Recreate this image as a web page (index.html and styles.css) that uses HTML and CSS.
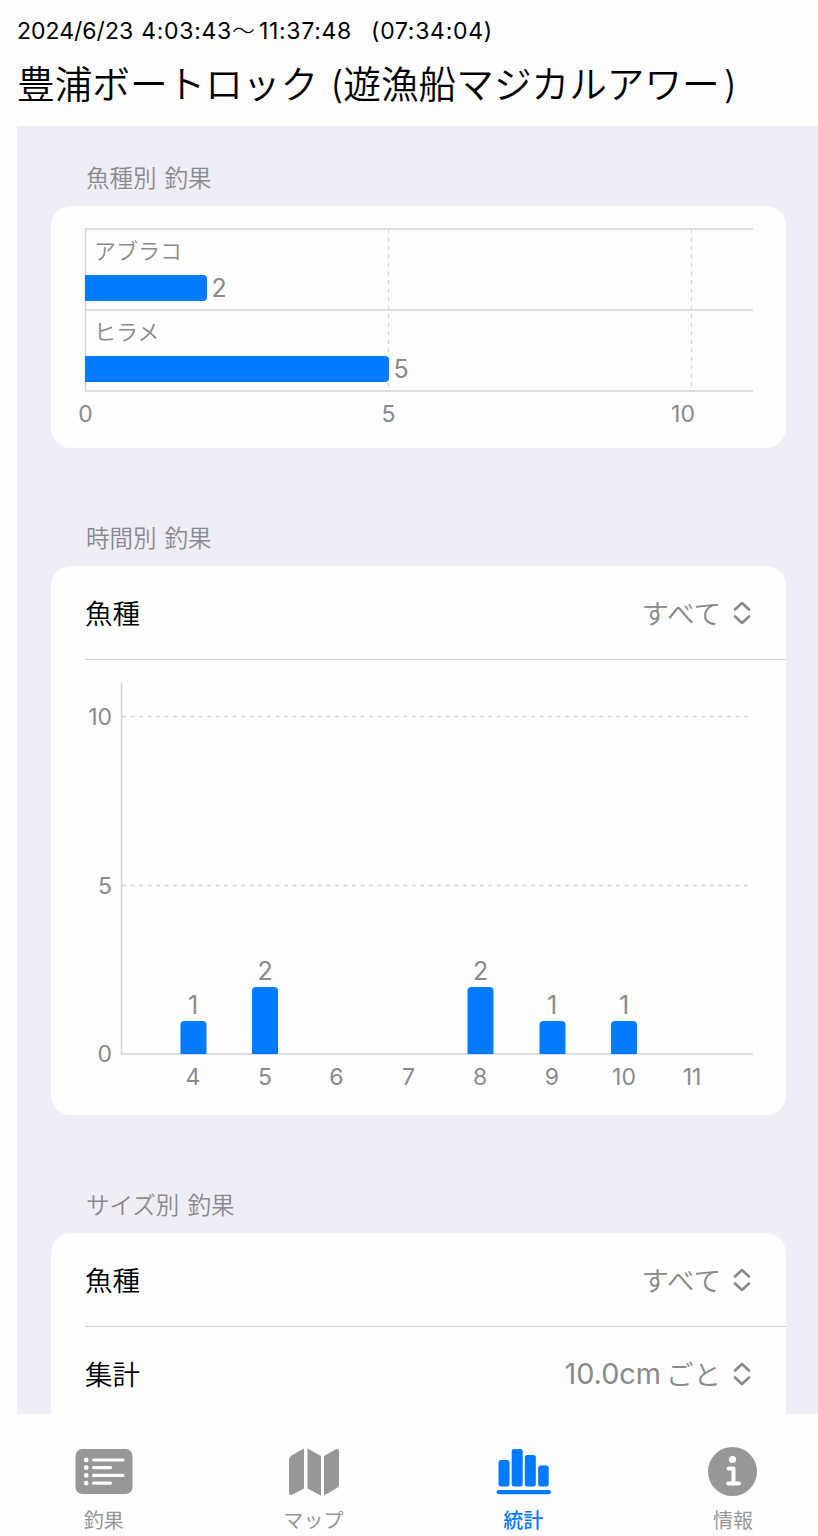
FILE: index.html
```html
<!DOCTYPE html>
<html lang="ja">
<head>
  <meta charset="UTF-8"/>
  <title>統計 - 豊浦ボートロック</title>
  <meta name="viewport" content="width=device-width, initial-scale=1.0"/>
  <link rel="stylesheet" href="styles.css">
</head>
<body>

<header class="header">
  <div class="trip-time"><span class="date">2024/6/23</span><span>4:03:43</span><span class="wave">～</span><span>11:37:48</span><span class="duration">(07:34:04)</span></div>
  <h1>豊浦ボートロック (遊漁船マジカルアワー<span class="paren">)</span></h1>
</header>

<main class="content">
  <h2>魚種別 釣果</h2>
  <section class="card">
    <svg class="chart" width="735" height="242" viewBox="0 0 735 242">
      <g class="axis">
        <path d="M34.5 23V185M34 23H702M34 104H702M34 185H702"/>
        <path class="dash" d="M337.5 23V185M640.5 23V185"/>
      </g>
      <g class="bar">
        <path d="M34 69H152q4 0 4 4V91q0 4-4 4H34z"/>
        <path d="M34 150H334q4 0 4 4V172q0 4-4 4H34z"/>
      </g>
      <text class="fish" x="43" y="53">アブラコ</text>
      <text class="fish" x="43" y="134">ヒラメ</text>
      <g class="value">
        <text x="168" y="91">2</text>
        <text x="350" y="172">5</text>
      </g>
      <g class="tick">
        <text x="34.5" y="216">0</text>
        <text x="337.5" y="216">5</text>
        <text x="632" y="216">10</text>
      </g>
    </svg>
  </section>

  <h2>時間別 釣果</h2>
  <section class="card">
    <div class="row">
      <span>魚種</span>
      <span class="select">すべて
        <svg width="18" height="26" viewBox="0 0 18 26"><path d="M2 9.5L9 3L16 9.5M2 16.5L9 23L16 16.5"/></svg>
      </span>
    </div>
    <svg class="chart" width="735" height="455" viewBox="0 0 735 455">
      <g class="axis">
        <path d="M70.5 23V394H702"/>
        <path class="dash" d="M71 56.5H699M71 225.5H699"/>
      </g>
      <g class="bar">
        <path d="M129.5 394V365q0-4 4-4h18q4 0 4 4V394z"/>
        <path d="M201 394V331q0-4 4-4h18q4 0 4 4V394z"/>
        <path d="M416.5 394V331q0-4 4-4h18q4 0 4 4V394z"/>
        <path d="M488.5 394V365q0-4 4-4h18q4 0 4 4V394z"/>
        <path d="M560 394V365q0-4 4-4h18q4 0 4 4V394z"/>
      </g>
      <g class="value">
        <text x="142" y="354">1</text>
        <text x="214" y="320">2</text>
        <text x="429.5" y="320">2</text>
        <text x="501" y="354">1</text>
        <text x="573" y="354">1</text>
      </g>
      <g class="tick side">
        <text x="61" y="65">10</text>
        <text x="61" y="234">5</text>
        <text x="61" y="402">0</text>
      </g>
      <g class="tick">
        <text x="142" y="425">4</text>
        <text x="214" y="425">5</text>
        <text x="285.5" y="425">6</text>
        <text x="357.5" y="425">7</text>
        <text x="429" y="425">8</text>
        <text x="501" y="425">9</text>
        <text x="573" y="425">10</text>
        <text x="641" y="425">11</text>
      </g>
    </svg>
  </section>

  <h2>サイズ別 釣果</h2>
  <section class="card more">
    <div class="row">
      <span>魚種</span>
      <span class="select">すべて
        <svg width="18" height="26" viewBox="0 0 18 26"><path d="M2 9.5L9 3L16 9.5M2 16.5L9 23L16 16.5"/></svg>
      </span>
    </div>
    <div class="row">
      <span>集計</span>
      <span class="select"><span class="num">10.0cm</span>ごと
        <svg width="18" height="26" viewBox="0 0 18 26"><path d="M2 9.5L9 3L16 9.5M2 16.5L9 23L16 16.5"/></svg>
      </span>
    </div>
  </section>
</main>

<nav class="tabs">
  <a class="tab">
    <svg width="60" height="52" viewBox="0 0 60 52">
      <rect x="1.5" y="3" width="57" height="45" rx="7"/>
      <g class="cut">
        <path d="M19.5 14H49M19.5 21.7H36.5M19.5 29.4H49M19.5 37.1H36.5"/>
        <path class="dots" d="M12.2 14h.01M12.2 21.7h.01M12.2 29.4h.01M12.2 37.1h.01"/>
      </g>
    </svg>
    <span>釣果</span>
  </a>
  <a class="tab">
    <svg width="60" height="52" viewBox="0 0 60 52">
      <path d="M20 2.5V42.5L8 48.8Q5 50 5 46.5V13.5Q5 10.8 7.5 9.5z"/>
      <path d="M23.5 2.5L37 10V49.5L23.5 42.5z"/>
      <path d="M40 10L52 3.2Q55 2 55 5.5V38.5Q55 41 52.5 42.3L40 49.5z"/>
    </svg>
    <span>マップ</span>
  </a>
  <a class="tab active">
    <svg width="60" height="52" viewBox="0 0 60 52">
      <rect x="5.5" y="14" width="11" height="26.5" rx="2.5"/>
      <rect x="18.7" y="3" width="11" height="37.5" rx="2.5"/>
      <rect x="31.8" y="9" width="11" height="31.5" rx="2.5"/>
      <rect x="45.2" y="19.5" width="10.5" height="21" rx="2.5"/>
      <rect x="3.5" y="44" width="54.5" height="4.2" rx="2.1"/>
    </svg>
    <span>統計</span>
  </a>
  <a class="tab">
    <svg width="60" height="52" viewBox="0 0 60 52">
      <circle cx="29.5" cy="25.5" r="24.5"/>
      <circle class="hole" cx="29.5" cy="13.5" r="3.6"/>
      <path class="stem" d="M25.5 22.5H30.5V37.5M25 37.5H36"/>
    </svg>
    <span>情報</span>
  </a>
</nav>

</body>
</html>
```
FILE: styles.css
```css
:root {
  --azul: #007aff;
  --fondo: #efeef6;
  --blanco: #fdfdfd;
  --gris: #8a8a8a;
  --linea: #d4d4d6;
}
* {
  margin: 0; padding: 0; box-sizing: border-box;
}
body {
  width: 818px;
  height: 1536px;
  overflow: hidden;
  background: var(--blanco);
  color: #000;
  font-family: Inter, "Noto Sans CJK JP", sans-serif;
  font-weight: 350;
}
.header {
  height: 126px;
  padding: 15px 0 0 17px;
}
.trip-time {
  display: flex;
  height: 32px;
  line-height: 32px;
  font-size: 23px;
  font-weight: 400;
  letter-spacing: 0.7px;
}
.date {
  margin-right: 8px;
  letter-spacing: 0;
}
.wave {
  width: 27px;
  font-weight: 300;
}
.duration {
  margin-left: 19px;
}
h1 {
  height: 72px;
  line-height: 76px;
  font-size: 37.65px;
  font-weight: 350;
  word-spacing: 1.5px;
  white-space: nowrap;
}
.paren {
  margin-left: 4px;
}
.content {
  height: 1288px;
  margin-left: 17px;
  padding: 22px 32px 0 34px;
  background: var(--fondo);
  overflow: hidden;
}
h2 {
  height: 58px;
  line-height: 62px;
  padding-left: 35px;
  font-size: 23.5px;
  font-weight: 350;
  word-spacing: 1.5px;
  color: #8a8a8e;
}
.card {
  margin-bottom: 60px;
  background: var(--blanco);
  border-radius: 20px;
}
.card.more {
  padding-bottom: 60px;
}
.row {
  display: flex;
  justify-content: space-between;
  align-items: center;
  height: 94px;
  margin-left: 34px;
  padding: 0 35px 2px 0;
  border-bottom: 1px solid var(--linea);
  font-size: 27.5px;
}
.row:last-child {
  border-bottom: none;
}
.select {
  display: flex;
  align-items: center;
  color: var(--gris);
}
.select svg {
  margin: 2px 0 0 12px;
  fill: none;
  stroke: var(--gris);
  stroke-width: 2.6;
  stroke-linecap: round;
  stroke-linejoin: round;
}
.num {
  margin-right: 5px;
  font-size: 28.8px;
  font-weight: 400;
}
.chart {
  display: block;
}
.axis path {
  fill: none;
  stroke: var(--linea);
  stroke-width: 1.5;
}
.axis .dash {
  stroke-width: 1.3;
  stroke-dasharray: 4 4.52;
}
.bar {
  fill: var(--azul);
}
.fish {
  font-size: 22px;
  fill: var(--gris);
}
.value, .tick {
  fill: var(--gris);
  font-weight: 400;
  text-anchor: middle;
}
.value {
  font-size: 25px;
}
.tick {
  font-size: 23px;
}
.side {
  text-anchor: end;
}
.tabs {
  display: grid;
  grid-template-columns: repeat(4, 209.7px);
  height: 122px;
  margin-left: -1px;
  padding-top: 32px;
}
.tab {
  display: flex;
  flex-direction: column;
  align-items: center;
  color: #979797;
  fill: #979797;
  font-size: 20px;
  font-weight: 400;
}
.tab span {
  height: 44px;
  line-height: 46px;
}
.tab.active {
  color: var(--azul);
  fill: var(--azul);
  font-weight: 500;
}
.cut, .stem {
  fill: none;
  stroke: var(--blanco);
  stroke-width: 3.2;
  stroke-linecap: round;
  stroke-linejoin: round;
}
.stem {
  stroke-width: 4;
}
.dots {
  stroke-width: 4.8;
}
.hole {
  fill: var(--blanco);
}
```
